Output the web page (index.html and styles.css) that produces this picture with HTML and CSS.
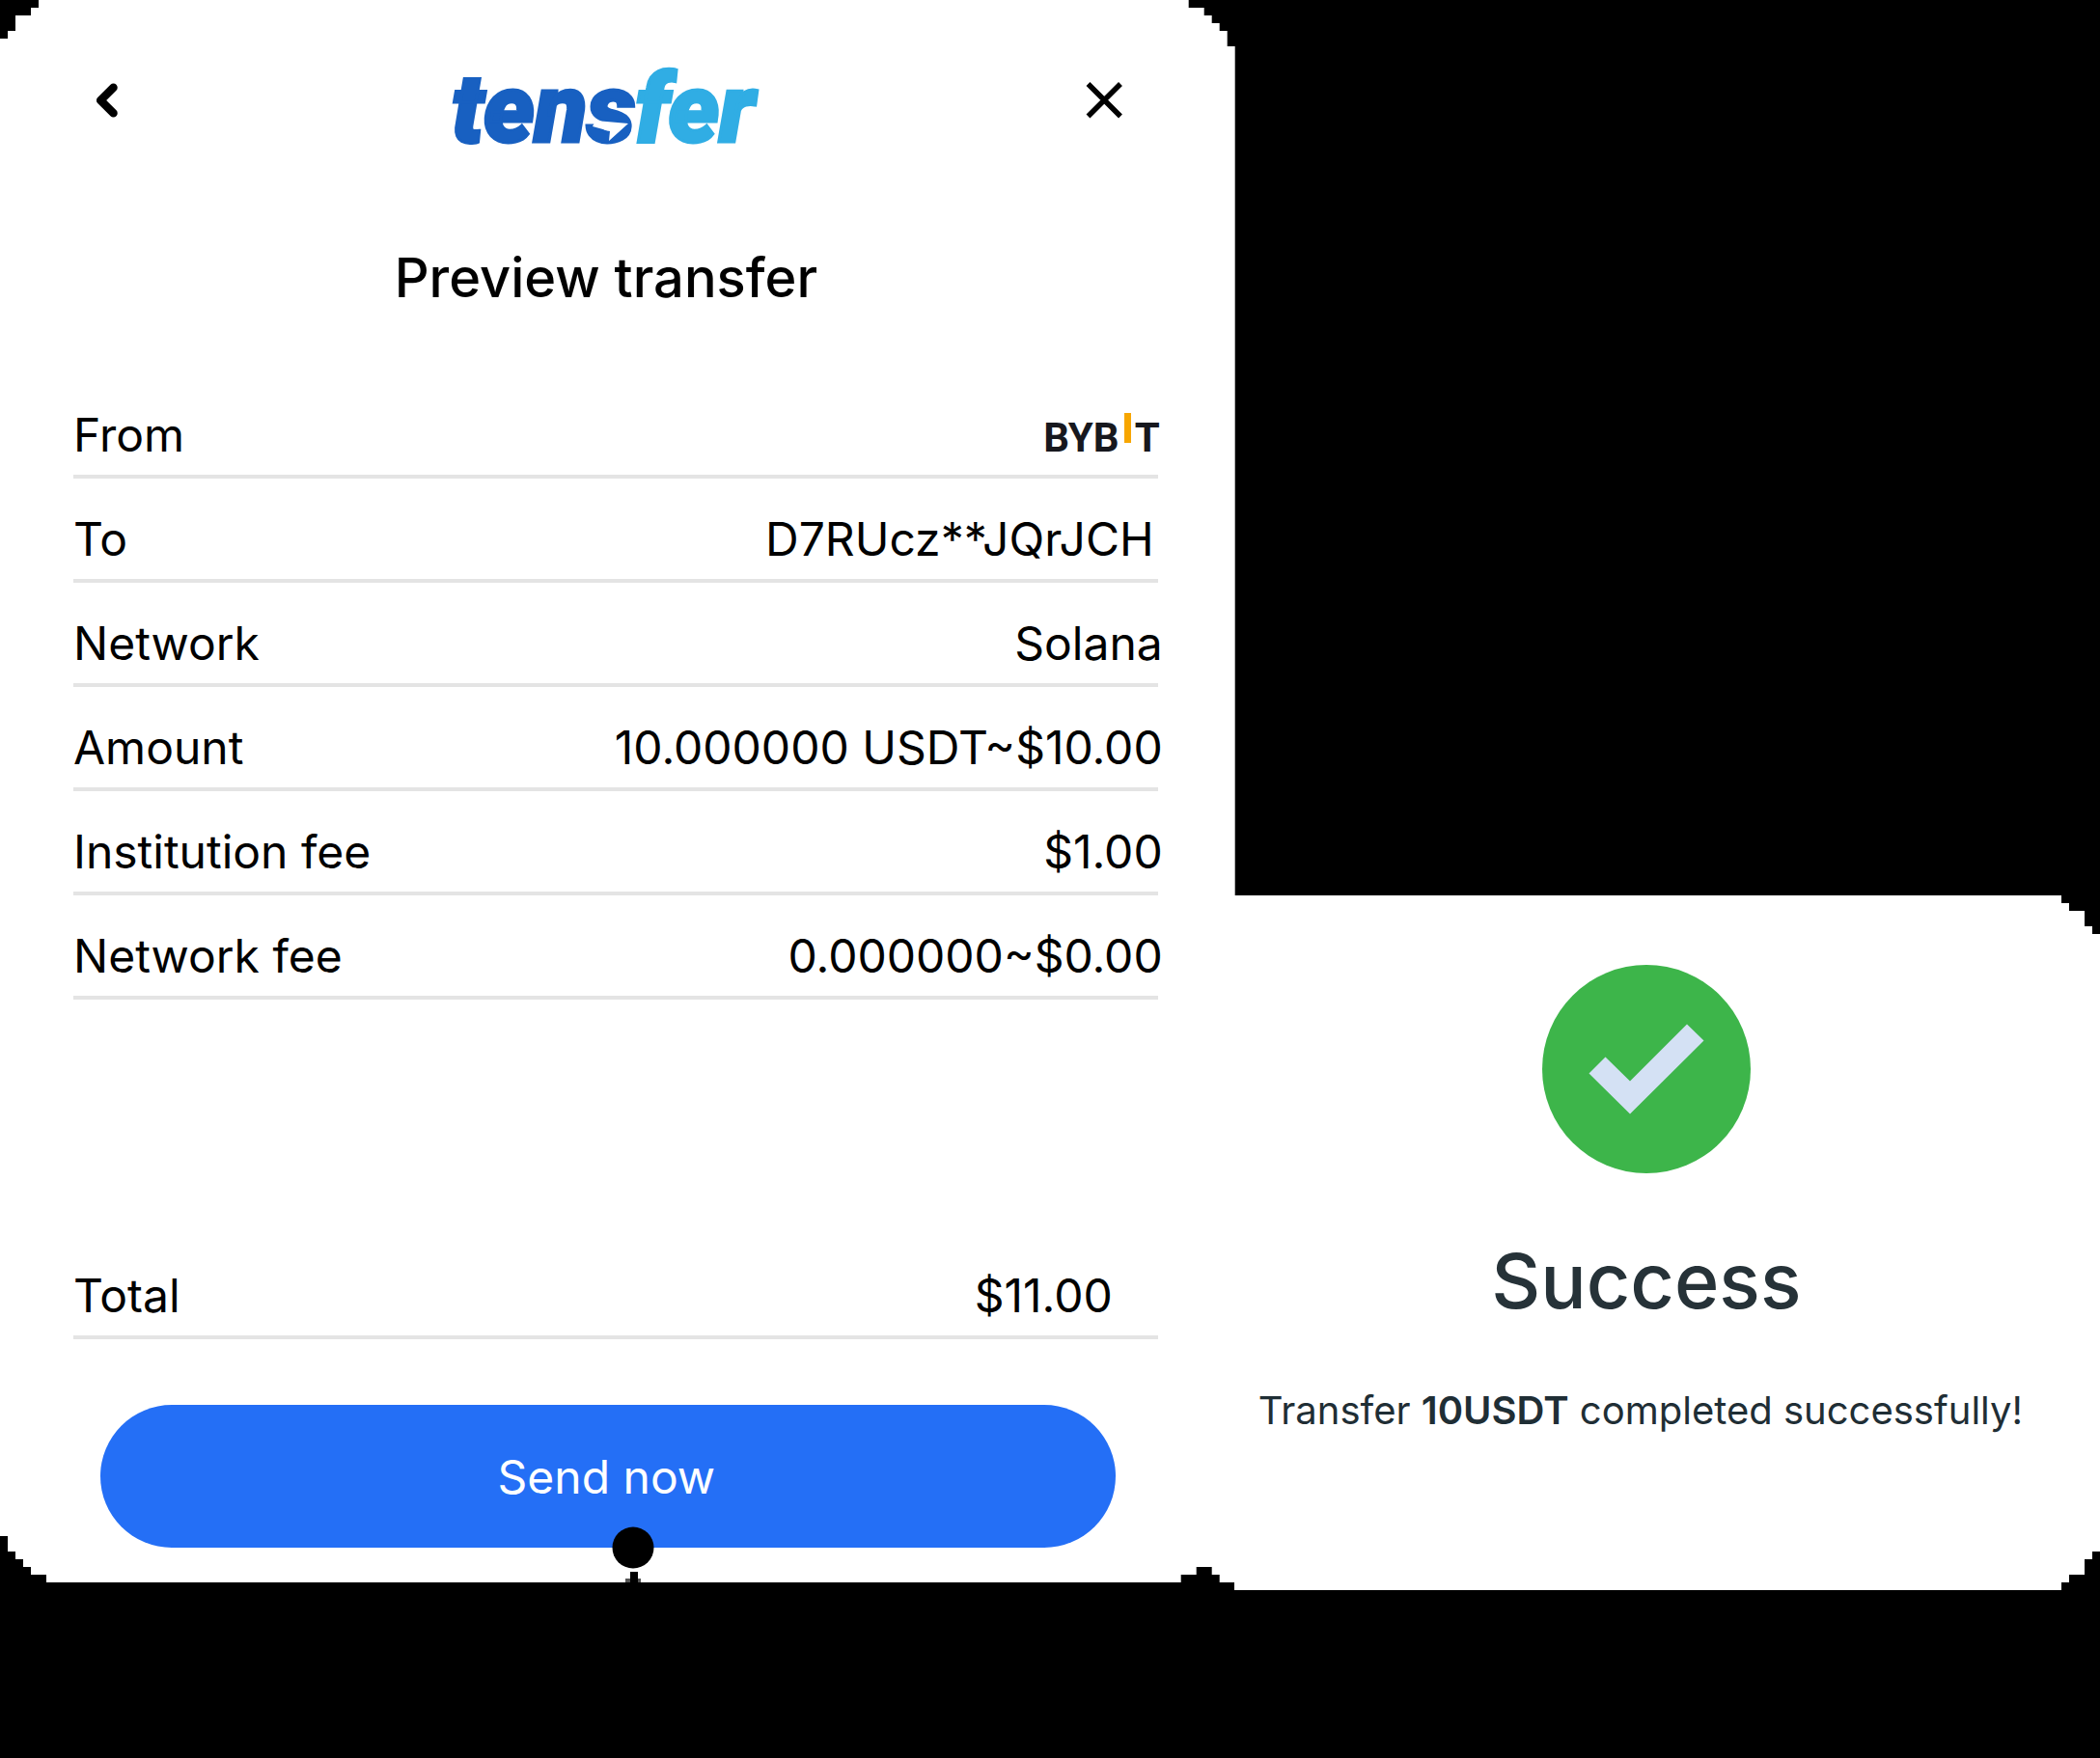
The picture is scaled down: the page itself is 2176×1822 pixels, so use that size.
FILE: index.html
```html
<!DOCTYPE html>
<html lang="en">
<head>
<meta charset="utf-8">
<title>Preview transfer</title>
<link rel="stylesheet" href="styles.css">
</head>
<body>
<main class="flow">
  <section class="card preview">
    <header class="topbar">
      <button class="icon-btn" type="button" aria-label="Back">
        <svg width="48" height="48" viewBox="0 0 48 48"><path d="M29.500 10.800L16.200 24L29.500 37.200" fill="none" stroke="#000" stroke-width="8.500" stroke-linecap="round" stroke-linejoin="round"/></svg>
      </button>
      <div class="logo">
        <span class="logo-dark">tens</span><span class="logo-light">fer</span>
        <svg class="logo-bolt" width="44" height="22" viewBox="0 0 44 22"><path d="M3 0L37 3L17 21L18 11L0 6Z" fill="#fff"/></svg>
      </div>
      <button class="icon-btn" type="button" aria-label="Close">
        <svg width="48" height="48" viewBox="0 0 48 48"><path d="M7.500 7L41 40.500M41 7L7.500 40.500" fill="none" stroke="#000" stroke-width="5.500"/></svg>
      </button>
    </header>
    <h1 class="title">Preview transfer</h1>
    <dl class="rows">
      <div class="row"><dt>From</dt><dd class="bybit"><span>BYB</span><i class="bybit-bar"></i><span>T</span></dd></div>
      <div class="row"><dt>To</dt><dd class="address">D7RUcz**JQrJCH</dd></div>
      <div class="row"><dt>Network</dt><dd>Solana</dd></div>
      <div class="row"><dt>Amount</dt><dd>10.000000 USDT~$10.00</dd></div>
      <div class="row"><dt>Institution fee</dt><dd>$1.00</dd></div>
      <div class="row"><dt>Network fee</dt><dd>0.000000~$0.00</dd></div>
      <div class="row total"><dt>Total</dt><dd>$11.00</dd></div>
    </dl>
    <div class="action">
      <button class="send" type="button">Send now</button>
      <svg class="pointer" width="44" height="58" viewBox="0 0 44 58"><circle cx="22" cy="22" r="21.500"/><path d="M14 54h16v4H14z" fill="#555"/><path d="M19 47h8v11h-8z"/></svg>
    </div>
  </section>
  <section class="card success">
    <svg class="check" width="216" height="216" viewBox="0 0 216 216"><circle cx="108" cy="108" r="108" fill="#3db54a"/><path d="M65.500 95.500L91 120.500L150 61.500L167.500 78.500L91 154.500L48.500 112.500Z" fill="#d4e1f4"/></svg>
    <h2 class="success-title">Success</h2>
    <p class="success-text">Transfer <strong>10USDT</strong> completed successfully!</p>
  </section>
</main>
</body>
</html>
```
FILE: styles.css
```css
* { box-sizing: border-box; }

body {
  margin: 0;
  background: #000;
  color: #000;
  font-family: Inter, "Liberation Sans", sans-serif;
}

button {
  border: 0;
  padding: 0;
  font: inherit;
  cursor: pointer;
}

.flow {
  display: grid;
  grid-template-columns: 10fr 7fr;
  align-items: start;
}

.card { background: #fff; }

/* Stepped 8px corners */
.preview {
  padding: 72px 80px 36px 76px;
  clip-path: polygon(
    0 40px, 8px 40px, 8px 32px, 16px 32px, 16px 16px, 32px 16px, 32px 8px, 40px 8px, 40px 0,
    calc(100% - 48px) 0, calc(100% - 48px) 8px, calc(100% - 32px) 8px, calc(100% - 32px) 16px,
    calc(100% - 24px) 16px, calc(100% - 24px) 24px, calc(100% - 16px) 24px, calc(100% - 16px) 32px,
    calc(100% - 8px) 32px, calc(100% - 8px) 48px, 100% 48px,
    100% 100%, calc(100% - 16px) 100%, calc(100% - 16px) calc(100% - 8px),
    calc(100% - 24px) calc(100% - 8px), calc(100% - 24px) calc(100% - 16px),
    calc(100% - 40px) calc(100% - 16px), calc(100% - 40px) calc(100% - 8px),
    calc(100% - 56px) calc(100% - 8px), calc(100% - 56px) 100%,
    48px 100%, 48px calc(100% - 8px), 32px calc(100% - 8px), 32px calc(100% - 16px),
    24px calc(100% - 16px), 24px calc(100% - 24px), 16px calc(100% - 24px),
    16px calc(100% - 32px), 8px calc(100% - 32px), 8px calc(100% - 48px), 0 calc(100% - 48px));
}

/* Overlaps the first card by a pixel so that no seam shows between them */
.success {
  margin: 928px 0 0 -1px;
  padding: 72px 24px 160px 25px;
  display: flex;
  flex-direction: column;
  align-items: center;
  clip-path: polygon(
    0 0, calc(100% - 40px) 0, calc(100% - 40px) 8px, calc(100% - 32px) 8px,
    calc(100% - 32px) 16px, calc(100% - 16px) 16px, calc(100% - 16px) 32px,
    calc(100% - 8px) 32px, calc(100% - 8px) 40px, 100% 40px,
    100% calc(100% - 40px), calc(100% - 8px) calc(100% - 40px),
    calc(100% - 8px) calc(100% - 32px), calc(100% - 16px) calc(100% - 32px),
    calc(100% - 16px) calc(100% - 16px), calc(100% - 32px) calc(100% - 16px),
    calc(100% - 32px) calc(100% - 8px), calc(100% - 40px) calc(100% - 8px),
    calc(100% - 40px) 100%, 0 100%);
}

.topbar {
  display: flex;
  justify-content: space-between;
  align-items: flex-start;
  height: 80px;
  padding: 8px 32px 0 12px;
}

.icon-btn {
  width: 48px;
  height: 48px;
  background: none;
}

.icon-btn svg { display: block; }

.logo {
  position: relative;
  padding-right: 6px;
  font: italic 900 100px/66px Roboto, sans-serif;
  -webkit-text-stroke: 3px currentColor;
  white-space: nowrap;
}

.logo-dark { color: #1860c1; }
.logo-light { color: #30ade4; }

.logo-bolt {
  position: absolute;
  left: 146px;
  top: 45px;
}

.title {
  margin: 104px 20px 0 0;
  font-size: 56px;
  line-height: 64px;
  font-weight: 500;
  text-align: center;
}

.rows { margin: 68px 0 0; }

.row {
  display: flex;
  justify-content: space-between;
  height: 108px;
  padding-top: 33px;
  border-bottom: 4px solid #e4e4e4;
  font-size: 48px;
  line-height: 60px;
}

.row dd {
  margin: 0 -5px 0 0;
  white-space: nowrap;
}

.row .address { margin-right: 4px; }

.row .bybit {
  display: flex;
  margin-right: -2px;
  color: #17181e;
  font: 700 42px/66px Roboto, sans-serif;
}

.bybit-bar {
  width: 7px;
  height: 31px;
  margin: 7px 4px 0 5px;
  background: #f7a600;
}

.total { margin-top: 244px; }
.row.total dd { margin-right: 47px; }

.action {
  position: relative;
  margin: 68px 44px 0 28px;
}

.send {
  display: block;
  width: 100%;
  height: 148px;
  padding-right: 3px;
  border-radius: 74px;
  background: #246ff6;
  color: #fff;
  font-size: 48px;
}

.pointer {
  position: absolute;
  left: 530px;
  bottom: -36px;
}

.check { display: block; margin-right: 44px; }

.success-title {
  margin: 62px 44px 0 0;
  color: #263238;
  font-size: 79px;
  line-height: 98px;
  font-weight: 500;
}

.success-text {
  margin: 60px 56px 0 0;
  color: #1f2e35;
  font-size: 40px;
  line-height: 52px;
  white-space: nowrap;
}

.success-text strong { font-weight: 600; }
```
